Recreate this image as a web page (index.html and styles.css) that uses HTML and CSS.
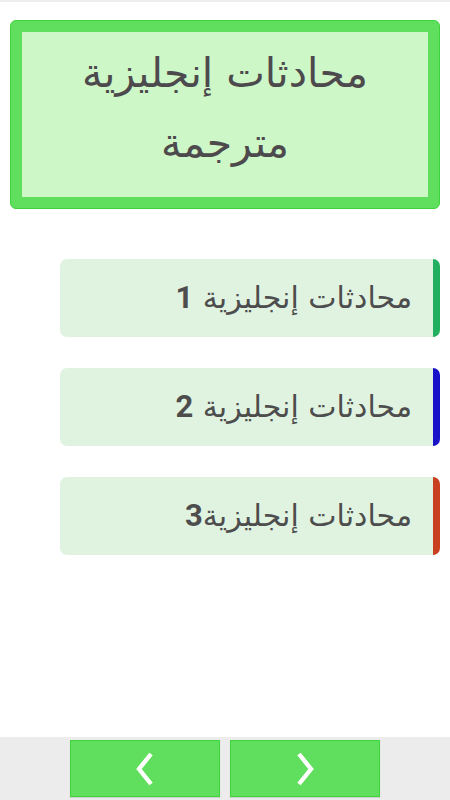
FILE: index.html
```html
<!DOCTYPE html>
<html lang="ar" dir="rtl">
<head>
<meta charset="utf-8">
<title>محادثات إنجليزية مترجمة</title>
<link rel="stylesheet" href="styles.css">
</head>
<body>
<div class="topline"></div>
<main class="content">
  <header class="hero">
    <h1 class="hero-title">محادثات إنجليزية<br>مترجمة</h1>
  </header>
  <ul class="list">
    <li class="card card-green"><span class="label">محادثات إنجليزية <b class="num">1</b></span></li>
    <li class="card card-blue"><span class="label">محادثات إنجليزية <b class="num">2</b></span></li>
    <li class="card card-red"><span class="label">محادثات إنجليزية<b class="num">3</b></span></li>
  </ul>
</main>
<footer class="nav" dir="ltr">
  <button class="nav-btn" aria-label="السابق">
    <svg width="22" height="34" viewBox="0 0 22 34"><path d="M17 2 L5 17 L17 32" fill="none" stroke="#fff" stroke-width="4.4" stroke-linecap="butt" stroke-linejoin="miter"/></svg>
  </button>
  <button class="nav-btn" aria-label="التالي">
    <svg width="22" height="34" viewBox="0 0 22 34"><path d="M5 2 L17 17 L5 32" fill="none" stroke="#fff" stroke-width="4.4" stroke-linecap="butt" stroke-linejoin="miter"/></svg>
  </button>
</footer>
</body>
</html>
```
FILE: styles.css
```css
html, body {
  margin: 0;
  padding: 0;
}
body {
  height: 100vh;
  display: flex;
  flex-direction: column;
  background: #ffffff;
  font-family: "DejaVu Sans", Roboto, sans-serif;
  color: #4d4d4d;
}
.topline {
  height: 2px;
  background: #eeeeee;
  flex: none;
}
.content {
  flex: 1;
  padding: 18px 10px 0 10px;
}
.hero {
  height: 189px;
  box-sizing: border-box;
  border: 1px solid #3fd43c;
  border-radius: 6px;
  background: #5fdf5d;
  padding: 11px;
}
.hero-title {
  margin: 0;
  height: 100%;
  box-sizing: border-box;
  background: #cdf7c6;
  font-size: 41px;
  font-weight: normal;
  line-height: 70px;
  text-align: center;
  padding-top: 6px;
  color: #4d4a4d;
}
.list {
  list-style: none;
  margin: 50px 0 0 50px;
  padding: 0;
  display: flex;
  flex-direction: column;
  gap: 31px;
}
.card {
  height: 78px;
  box-sizing: border-box;
  background: #e0f3e0;
  border-radius: 7px;
  border-right: 7px solid #22b060;
  display: flex;
  align-items: center;
  padding-right: 21px;
  padding-bottom: 2px;
  font-size: 30px;
  color: #4d4d4d;
}
.card-blue { border-right-color: #1a12c8; }
.card-red { border-right-color: #c8401f; }
.num {
  font-family: Roboto, sans-serif;
  font-weight: bold;
  font-size: 31px;
}
.nav {
  flex: none;
  height: 63px;
  background: #ececec;
  display: flex;
  justify-content: center;
  align-items: center;
  gap: 10px;
}
.nav-btn {
  width: 150px;
  height: 57px;
  margin: 0;
  padding: 0;
  background: #5fdf5d;
  border: 1px solid #3fd43c;
  display: flex;
  align-items: center;
  justify-content: center;
  box-shadow: 0 1px 1px rgba(0,0,0,0.12);
}
```
